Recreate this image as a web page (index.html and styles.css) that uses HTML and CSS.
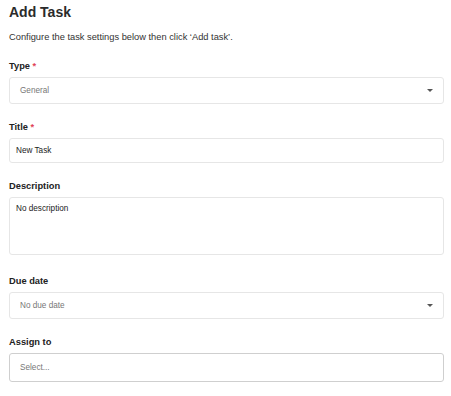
FILE: index.html
```html
<!DOCTYPE html>
<html lang="en">
<head>
    <meta charset="UTF-8">
    <meta name="viewport" content="width=device-width, initial-scale=1.0">
    <title>Add Task</title>
    <link rel="stylesheet" href="styles.css">
</head>
<body>
    <div class="form">
        <h1>Add Task</h1>
        <p class="intro">Configure the task settings below then click ‘Add task’.</p>

        <div class="field">
            <label>Type <span class="req">*</span></label>
            <div class="box select">
                <span class="muted">General</span>
                <span class="caret"></span>
            </div>
        </div>

        <div class="field">
            <label>Title <span class="req">*</span></label>
            <div class="box input">New Task</div>
        </div>

        <div class="field field-text">
            <label>Description</label>
            <div class="box textarea">No description</div>
        </div>

        <div class="field">
            <label>Due date</label>
            <div class="box select">
                <span class="muted">No due date</span>
                <span class="caret"></span>
            </div>
        </div>

        <div class="field">
            <label>Assign to</label>
            <div class="box select strong">
                <span class="muted">Select...</span>
            </div>
        </div>
    </div>
</body>
</html>
```

FILE: styles.css
```css
body {
    margin: 0;
    padding: 0 7px 0 9px;
    background-color: #fff;
    color: #222;
    font-family: "Liberation Sans", Arial, sans-serif;
}

h1 {
    margin: 4px 0 0;
    font-size: 14px;
    line-height: 17px;
    font-weight: bold;
    color: #2b2b2b;
}

.intro {
    margin: 10px 0 0;
    font-size: 9.3px;
    line-height: 12px;
    color: #333;
}

.field {
    margin-top: 17px;
}

.field-text {
    padding-bottom: 3px;
}

.field label {
    display: block;
    font-size: 9.3px;
    line-height: 12px;
    font-weight: bold;
    color: #222;
    margin-bottom: 5px;
}

.req {
    color: #e0435a;
}

.box {
    border: 1px solid #e6e6e6;
    border-radius: 3px;
    font-size: 8.2px;
    color: #222;
    box-sizing: border-box;
}

.select {
    height: 27px;
    display: flex;
    align-items: center;
    justify-content: space-between;
    padding: 0 10px 0 10px;
}

.input {
    height: 25px;
    display: flex;
    align-items: center;
    padding: 0 6px;
}

.textarea {
    height: 58px;
    padding: 6px 6px;
}

.muted {
    color: #777;
}

.caret {
    width: 0;
    height: 0;
    border-left: 3px solid transparent;
    border-right: 3px solid transparent;
    border-top: 3.5px solid #555;
}

.strong {
    border-color: #cfcfcf;
    height: 29px;
}
```
